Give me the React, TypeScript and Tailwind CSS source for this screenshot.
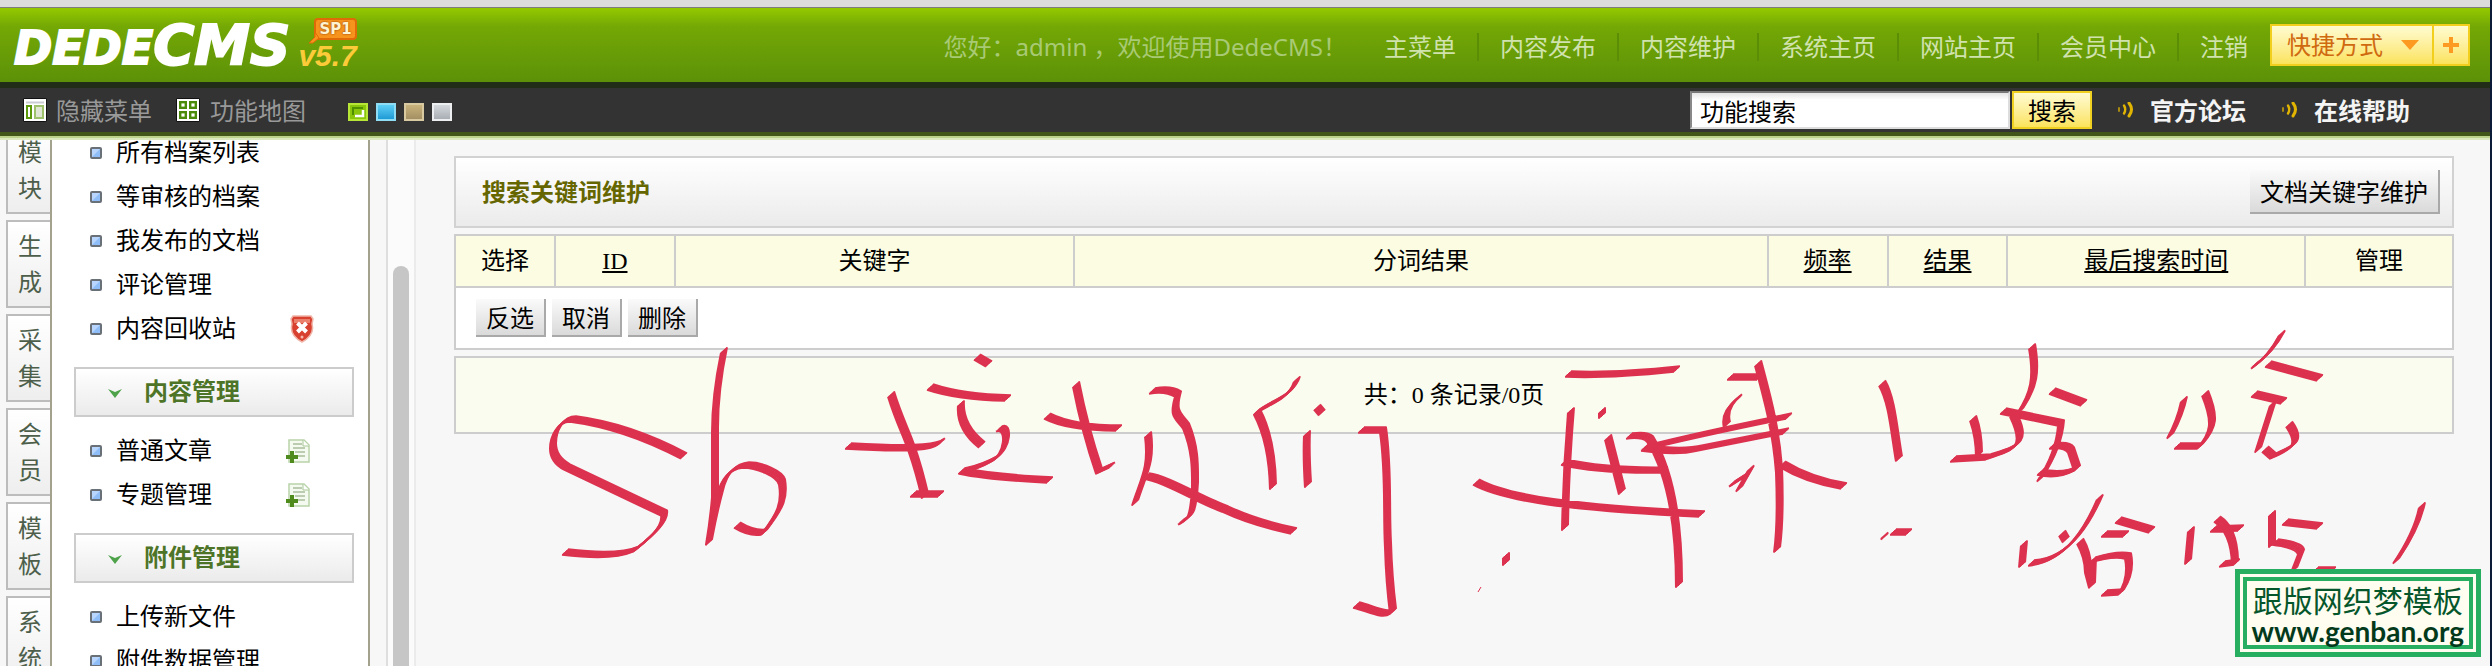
import type { ReactNode } from 'react';

const navLinks = ['主菜单', '内容发布', '内容维护', '系统主页', '网站主页', '会员中心'];

const tabs = ['模块', '生成', '采集', '会员', '模板', '系统'];

const skins = [
  { name: '蓝色', color: 'from-[#5cd0f5] to-[#1d9ad6] border-[#8fdcf5]' },
  { name: '棕色', color: 'from-[#c9b27c] to-[#a38f62] border-[#d9c9a0]' },
  { name: '灰色', color: 'from-[#d5d9dd] to-[#a9aeb4] border-[#eceef0]' },
];

const columns = [
  { label: '选择', width: 'w-[5%]', sortable: false },
  { label: 'ID', width: 'w-[6%]', sortable: true },
  { label: '关键字', width: 'w-[20%]', sortable: false },
  { label: '分词结果', width: 'w-[34.7%]', sortable: false },
  { label: '频率', width: 'w-[6%]', sortable: true },
  { label: '结果', width: 'w-[6%]', sortable: true },
  { label: '最后搜索时间', width: 'w-[14.9%]', sortable: true },
  { label: '管理', width: 'w-[7.4%]', sortable: false },
];

// Pen strokes of the handwritten note, one path per stroke
const strokes = [
  'M684 456Q627 426 573 419C560 419 553 434 553 446C553 455 558 462 567 467L664 513C666 524 651 537 636 549C618 557 590 555 565 552',
  'M724 350C719 374 715 400 715 430L715 495Q713 518 709 542Q714 515 720 493Q726 467 746 465C760 465 780 474 782 482C785 500 781 510 764 532Q752 534 737 525',
  'M848 446Q900 449 920 447Q936 446 942 441',
  'M891 394C899 420 906 432 912 450Q919 470 925 496',
  'M913 494H941',
  'M977 357L989 364',
  'M930 387Q960 397 1008 398',
  'M961 403Q959 427 982 445',
  'M999 429C1010 424 1008 452 994 459Q980 467 962 471Q990 477 1050 480',
  'M1076 384Q1085 430 1099 471L1112 465',
  'M1047 416Q1070 428 1119 428',
  'M1152 391Q1168 388 1178 394C1172 415 1178 415 1186 426C1196 450 1195 470 1195 485C1193 520 1189 517 1181 522',
  'M1148 434C1152 465 1144 475 1135 503',
  'M1146 476C1165 478 1200 500 1225 509Q1255 523 1294 531',
  'M1297 379C1291 398 1270 402 1257 412Q1272 440 1273 487',
  'M1317 407L1322 413',
  'M1307 433C1306 455 1307 470 1308 485',
  'M1361 430H1383C1389 470 1386 510 1388 545Q1389 580 1393 611C1385 617 1370 608 1356 605',
  'M1506 555V563',
  'M1568 374Q1610 376 1677 369',
  'M1571 410Q1566 470 1565 528',
  'M1602 410V416',
  'M1608 437L1622 492',
  'M1564 462Q1600 471 1665 470',
  'M1476 482C1505 498 1570 508 1702 514',
  'M1629 436Q1645 434 1650 439C1672 475 1679 530 1679 585',
  'M1644 448Q1700 434 1789 416',
  'M1644 448Q1680 453 1700 448Q1740 440 1786 431',
  'M1730 377H1760',
  'M1758 363C1768 400 1776 430 1779 470Q1781 520 1777 550',
  'M1739 397Q1723 410 1727 425',
  'M1751 468L1739 489',
  'M1732 484L1746 475',
  'M1782 464Q1808 480 1844 486',
  'M1882 383C1892 400 1894 430 1899 459',
  'M2032 346C2037 375 2034 390 2020 411',
  'M2052 391L2084 403',
  'M2003 411L2061 423Q2059 450 2040 479',
  'M2052 446Q2067 444 2071 450L2077 468Q2060 477 2040 472',
  'M1973 418Q1979 435 1979 455',
  'M2013 414C2028 445 2018 447 1988 457L1953 459',
  'M2184 399Q2180 418 2170 436',
  'M2205 393C2216 420 2214 430 2200 446L2177 446',
  'M2282 333Q2271 354 2254 366',
  'M2268 364L2320 378',
  'M2254 394L2284 401',
  'M2273 403L2258 450',
  'M2289 424C2304 445 2290 448 2273 456L2265 449',
  'M1884 537L1885 535',
  'M1893 532H1909',
  'M2100 497C2090 520 2070 560 2031 563',
  'M2024 543L2022 565',
  'M2062 533L2066 540',
  'M2118 520L2152 530',
  'M2104 534H2126',
  'M2080 541Q2088 555 2088 570L2092 585L2093 560Q2115 553 2128 556Q2132 575 2121 592L2104 593',
  'M2191 529L2188 562',
  'M2217 519Q2234 530 2235 562',
  'M2213 529L2241 528',
  'M2222 564L2237 562',
  'M2272 513V545',
  'M2285 522L2320 526',
  'M2275 542Q2300 545 2301 552L2294 570',
  'M2315 570H2333',
  'M2422 505Q2417 530 2396 561',
];

// The pen has a flat nib held at an angle, so every stroke is laid down along it
const nib = [-3, -2, -1, 0, 1, 2, 3];

function Scribble() {
  return (
    <svg
      className="pointer-events-none absolute top-0 left-0 w-full"
      viewBox="0 0 2490 666"
      fill="none"
      stroke="#dc324f"
      strokeWidth="2"
      strokeLinejoin="round"
      aria-hidden="true"
    >
      {nib.map((n) => (
        <path key={n} d={strokes.join('')} transform={`translate(${n} ${-n * 0.9})`} />
      ))}
      <path d="M1478 592l3-5" strokeWidth="1" />
    </svg>
  );
}

function LayoutIcon() {
  return (
    <svg className="size-6" viewBox="0 0 24 24" aria-hidden="true">
      <rect width="24" height="24" rx="2" fill="#111" />
      <rect x="1" y="1" width="22" height="22" fill="#fff" />
      <path d="M3 4.5h18" stroke="#c9ccd2" strokeWidth="2" />
      <rect x="4" y="8" width="4" height="12" fill="#fff" stroke="#5c9a0c" strokeWidth="2" />
      <rect x="12" y="8" width="8" height="12" fill="#dfe6d3" stroke="#9dc26b" strokeWidth="2" />
    </svg>
  );
}

function MapIcon() {
  return (
    <svg className="size-6" viewBox="0 0 24 24" aria-hidden="true">
      <rect width="24" height="24" rx="2" fill="#111" />
      <rect x="1" y="1" width="22" height="22" fill="#fff" />
      <g fill="none" stroke="#4c8a0c" strokeWidth="2.4">
        <rect x="4.2" y="4.2" width="5.6" height="5.6" />
        <rect x="14.2" y="4.2" width="5.6" height="5.6" />
        <rect x="4.2" y="14.2" width="5.6" height="5.6" />
        <rect x="14.2" y="14.2" width="5.6" height="5.6" />
      </g>
    </svg>
  );
}

function WaveIcon() {
  return (
    <svg className="h-4 w-4" viewBox="0 0 16 16" fill="none" stroke="#e0b400" strokeLinecap="round" aria-hidden="true">
      <path d="M1 6v3" strokeWidth="2" stroke="#a88a10" />
      <path d="M6 3.5q2.500 4 0 8" strokeWidth="2.4" />
      <path d="M11 1q5 6.500 0 13" strokeWidth="3" />
    </svg>
  );
}

function Bullet() {
  return (
    <svg className="size-3 shrink-0" viewBox="0 0 12 12" aria-hidden="true">
      <rect x="1" y="1" width="10" height="10" rx="1" fill="#8fbdf8" stroke="#6a7078" strokeWidth="2" />
      <path d="M2 2h8L2 10z" fill="#b8d6fd" />
    </svg>
  );
}

function ShieldIcon() {
  return (
    <svg className="ml-1 h-7 w-6" viewBox="0 0 24 28" aria-hidden="true">
      <path d="M3 1h18l2 3-1 5q3 11-10 18Q-1 20 2 9L1 4z" fill="#d8402f" stroke="#f0b5a8" strokeWidth="1.500" />
      <path d="M4 4h16v4H4z" fill="#ea7f6c" />
      <path d="M7.500 8l9 9M16.500 8l-9 9" stroke="#fff" strokeWidth="4" />
      <circle cx="12" cy="22" r="1.500" fill="#f5b9ad" />
    </svg>
  );
}

function AddPageIcon() {
  return (
    <svg className="size-6" viewBox="0 0 24 24" aria-hidden="true">
      <path d="M3 1h15l5 5v17H3z" fill="#f4faf0" stroke="#b9d3a9" strokeWidth="1.500" />
      <path d="M17 1v6h6" fill="#fff" stroke="#a9c897" />
      <path d="M7 5h9M7 9h12M9 13h10M12 17h7" stroke="#a9bd9c" strokeWidth="1.500" />
      <path d="M6 12v12M0 18h12" stroke="#4f8a1d" strokeWidth="4" />
    </svg>
  );
}

function GreyButton({ children, className }: { children: ReactNode; className: string }) {
  return (
    <button
      type="button"
      className={`flex items-center justify-center border-r-2 border-b-2 border-[#a9a9a9] bg-gradient-to-b from-[#fafafa] to-[#dadada] pt-[3px] text-2xl whitespace-nowrap ${className}`}
    >
      {children}
    </button>
  );
}

function MenuItem({ label, icon }: { label: string; icon?: ReactNode }) {
  return (
    <li className="flex h-11 items-center">
      <Bullet />
      <a href="#" className="ml-[14px] w-[170px] text-black">
        {label}
      </a>
      {icon}
    </li>
  );
}

function MenuHeading({ label }: { label: string }) {
  return (
    <h2 className="mt-4 mb-3 flex h-[50px] items-center border-2 border-[#ccc] bg-gradient-to-b from-white to-[#ebebeb] pl-[31px] font-bold text-[#4d7427]">
      <svg className="mt-1 h-[10px] w-4" viewBox="0 0 16 10" aria-hidden="true">
        <path d="M1 0l7 3 7-3-7 9z" fill="#4ea34a" />
      </svg>
      <span className="ml-[21px]">{label}</span>
    </h2>
  );
}

function Header() {
  return (
    <header className="shrink-0">
      <div className="flex h-[74px] items-center bg-gradient-to-b from-[#94c900] via-[#74a805] via-25% to-[#5c9108] font-['Noto_Sans','Noto_Sans_CJK_SC',sans-serif] text-2xl">
        <div className="flex flex-1 items-center pl-[14px]">
          <a
            href="#"
            className="flex items-baseline font-['DejaVu_Sans',sans-serif] leading-none font-bold text-white italic [-webkit-text-stroke:2px_#fff]"
          >
            <span className="text-[46px]">DEDE</span>
            <span className="text-[56px]">CMS</span>
          </a>
          <div className="flex flex-col items-start pl-2">
            <span className="relative ml-4 rounded-sm border-2 border-[#e06a08] bg-[#f7941d] px-[3px] font-['DejaVu_Sans',sans-serif] text-[15px] leading-[18px] font-bold text-[#fff3d0] [text-shadow:0_0_2px_#7a2d00]">
              SP1
              <svg className="absolute -bottom-[6px] -left-[8px] size-3" viewBox="0 0 12 12" aria-hidden="true">
                <path d="M7 0v5L1 11h4l6-5z" fill="#f7941d" stroke="#e06a08" />
              </svg>
            </span>
            <span className="font-['Liberation_Sans',sans-serif] text-[30px] leading-8 font-bold text-[#fccb3a] italic">
              v5.7
            </span>
          </div>
        </div>
        <p className="mr-4 pt-1 whitespace-pre text-[#a9ca75]">您好：admin ，欢迎使用DedeCMS！</p>
        <nav className="flex items-center pt-1 text-[#d0e2ae]">
          {navLinks.map((link) => (
            <a key={link} href="#" className="flex h-7 items-center border-r-2 border-[#5b8d07] px-[21px]">
              {link}
            </a>
          ))}
          <a href="#" className="pl-[21px]">
            注销
          </a>
        </nav>
        <div className="mr-5 ml-[22px] flex h-[42px] text-[#d06a10]">
          <button
            type="button"
            className="flex w-[164px] items-center justify-between border-2 border-[#f2cf1c] bg-gradient-to-b from-[#fffbd0] to-[#fbe35a] pr-[13px] pl-[15px]"
          >
            快捷方式
            <svg className="h-[10px] w-[18px]" viewBox="0 0 18 10" aria-hidden="true">
              <path d="M0 0h18l-9 10z" fill="#fd9a22" />
            </svg>
          </button>
          <button
            type="button"
            aria-label="添加快捷方式"
            className="flex w-9 items-center justify-center border-2 border-l-0 border-[#f2cf1c] bg-gradient-to-b from-[#fffbd0] to-[#fbe35a]"
          >
            <svg className="size-4" viewBox="0 0 16 16" aria-hidden="true">
              <path d="M8 0v16M0 8h16" stroke="#fd9a22" strokeWidth="4" />
            </svg>
          </button>
        </div>
      </div>

      <div className="flex h-[54px] items-center border-t-[6px] border-b-4 border-t-[#212d16] border-b-[#42561a] bg-[#333] pl-[23px] font-['Noto_Sans_CJK_SC',sans-serif] text-2xl text-[#999]">
        <a href="#" className="flex items-center gap-[9px]">
          <LayoutIcon />
          隐藏菜单
        </a>
        <a href="#" className="ml-[24px] flex items-center gap-[10px]">
          <MapIcon />
          功能地图
        </a>
        <div className="mt-1 ml-[42px] flex gap-2">
          <button type="button" aria-label="绿色" className="flex h-[18px] w-5 items-center justify-center bg-[#7fc400]">
            <svg className="h-[18px] w-5" viewBox="0 0 20 18" aria-hidden="true">
              <rect x="1" y="1" width="18" height="16" fill="#8ac70c" stroke="#b8e636" strokeWidth="2" />
              <path d="M5 12V5h10" fill="none" stroke="#4f8f00" strokeWidth="2" />
              <path d="M7 13h8V7" fill="none" stroke="#fff" strokeWidth="2.500" />
            </svg>
          </button>
          {skins.map((skin) => (
            <button
              key={skin.name}
              type="button"
              aria-label={skin.name}
              className={`h-[18px] w-5 border-2 bg-gradient-to-b ${skin.color}`}
            />
          ))}
        </div>
        <form className="ml-auto flex items-center gap-[2px] text-black" onSubmit={(e) => e.preventDefault()}>
          <input
            type="text"
            aria-label="功能搜索"
            defaultValue="功能搜索"
            className="h-[38px] w-80 border-2 border-t-[#777] border-r-[#ddd] border-b-[#ddd] border-l-[#888] bg-gradient-to-b from-[#e4e4e4] to-white to-20% px-2"
          />
          <button
            type="submit"
            className="flex h-[38px] w-20 items-center justify-center border-2 border-[#f0d020] bg-gradient-to-b from-[#fffbd0] to-[#fbe35a]"
          >
            搜索
          </button>
        </form>
        <nav className="mr-20 ml-[26px] flex items-center gap-9 font-bold text-[#f4f4f4]">
          <a href="#" className="flex items-center gap-4">
            <WaveIcon />
            官方论坛
          </a>
          <a href="#" className="flex items-center gap-4">
            <WaveIcon />
            在线帮助
          </a>
        </nav>
      </div>
      <div className="h-1 border-t-2 border-[#bcd18a] bg-[#dce9bf]" />
    </header>
  );
}

function Sidebar() {
  return (
    <aside className="flex shrink-0 overflow-hidden">
      <div className="-mt-[14px] flex w-[50px] flex-col gap-[6px] pl-[6px]">
        {tabs.map((tab) => (
          <a
            key={tab}
            href="#"
            className="flex h-[88px] shrink-0 flex-col items-center justify-center border-2 border-r-0 border-[#bcbcbc] bg-gradient-to-b from-white to-[#eee] pt-[2px] pl-[2px] leading-9 text-[#4d5f4b]"
          >
            {tab.split('').map((char) => (
              <span key={char}>{char}</span>
            ))}
          </a>
        ))}
      </div>
      <div className="w-80 border-x-2 border-[#a3a38d] bg-white pr-[14px] pl-[22px]">
        <ul className="-mt-[9px] pl-4">
          <MenuItem label="所有档案列表" />
          <MenuItem label="等审核的档案" />
          <MenuItem label="我发布的文档" />
          <MenuItem label="评论管理" />
          <MenuItem label="内容回收站" icon={<ShieldIcon />} />
        </ul>
        <MenuHeading label="内容管理" />
        <ul className="pl-4">
          <MenuItem label="普通文章" icon={<AddPageIcon />} />
          <MenuItem label="专题管理" icon={<AddPageIcon />} />
        </ul>
        <MenuHeading label="附件管理" />
        <ul className="pl-4">
          <MenuItem label="上传新文件" />
          <MenuItem label="附件数据管理" />
        </ul>
      </div>
      <div className="ml-4 flex w-[30px] justify-center border-x-2 border-l-[#dedede] border-r-[#ebebeb] bg-[#fbfbfb] pt-[126px]">
        <div className="w-4 rounded-t-full bg-[#c6c6c6]" />
      </div>
    </aside>
  );
}

function Content() {
  return (
    <main className="flex flex-1 flex-col gap-[6px] py-4 pr-9 pl-[38px]">
      <div className="flex h-[72px] items-center justify-between border-2 border-[#d2d2d2] bg-gradient-to-b from-white to-[#ebebeb] pr-3 pl-[26px]">
        <h1 className="pt-[2px] font-bold text-[#666600]">搜索关键词维护</h1>
        <GreyButton className="h-11 w-[190px]">文档关键字维护</GreyButton>
      </div>

      <table className="w-full table-fixed border-collapse border-2 border-[#cdcdcd] bg-white text-center">
        <thead>
          <tr className="h-[52px] bg-[#fbfce2]">
            {columns.map((col) => (
              <th key={col.label} className={`border-2 border-[#cdcdcd] p-0 font-normal ${col.width}`}>
                {col.sortable ? (
                  <a href="#" className="underline decoration-2 underline-offset-2">
                    {col.label}
                  </a>
                ) : (
                  col.label
                )}
              </th>
            ))}
          </tr>
        </thead>
        <tbody>
          <tr className="h-[62px]">
            <td colSpan={8} className="p-0">
              <div className="flex gap-[6px] pl-5">
                <GreyButton className="h-[38px] w-[70px]">反选</GreyButton>
                <GreyButton className="h-[38px] w-[70px]">取消</GreyButton>
                <GreyButton className="h-[38px] w-[70px]">删除</GreyButton>
              </div>
            </td>
          </tr>
        </tbody>
      </table>

      <div className="flex h-[78px] items-center justify-center border-2 border-[#cdcdcd] bg-[#f9fcee]">
        共：0 条记录/0页
      </div>
    </main>
  );
}

export default function App() {
  return (
    <div className="relative flex h-screen flex-col overflow-hidden border-r-2 border-[#0c1c38] bg-[#f7f7f7] font-['Liberation_Serif','Noto_Sans_CJK_SC',serif] text-2xl text-black">
      <div className="h-2 shrink-0 border-b border-[#7d7d80] bg-[#dcdcdc]" />
      <Header />
      <div className="flex min-h-0 flex-1">
        <Sidebar />
        <Content />
      </div>
      <Scribble />
      <div className="absolute right-[9px] bottom-[9px] border-[5px] border-[#27ae60] bg-[#fffdf0] p-[3px]">
        <div className="flex flex-col items-center border-4 border-[#27ae60] px-[5px] font-['Noto_Sans_CJK_SC',sans-serif]">
          <span className="text-[30px] leading-9 whitespace-nowrap text-[#06562b]">跟版网织梦模板</span>
          <a href="#" className="font-['Lato',sans-serif] text-[28px] leading-7 font-bold text-[#043a1c]">
            www.genban.org
          </a>
        </div>
      </div>
    </div>
  );
}
